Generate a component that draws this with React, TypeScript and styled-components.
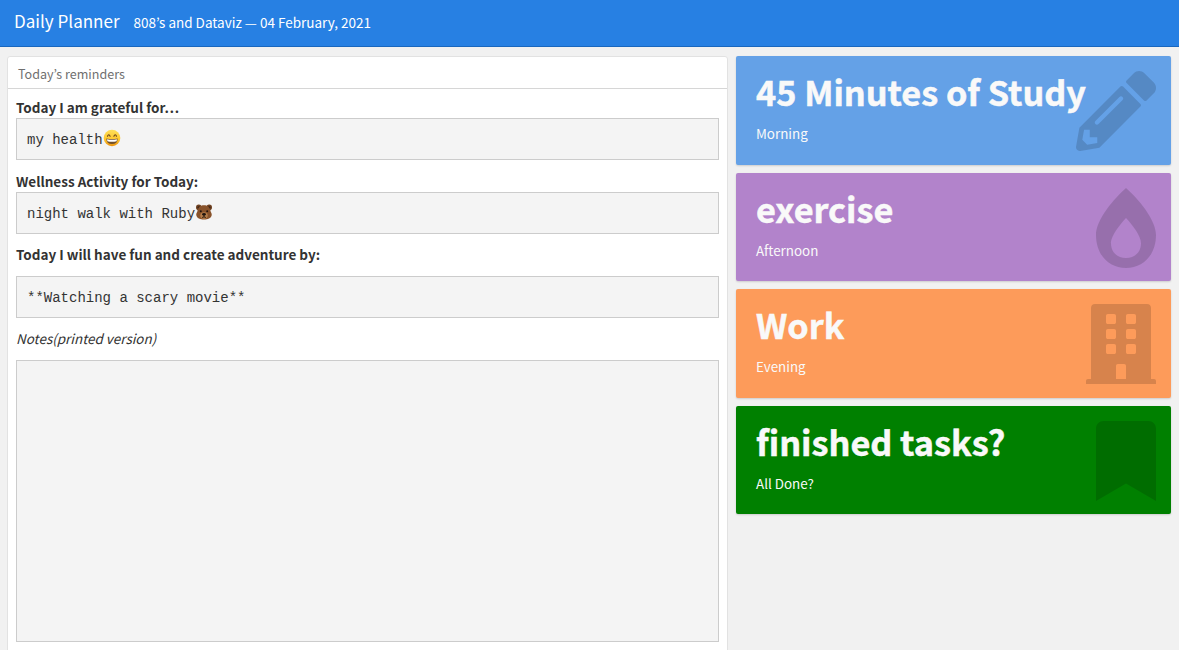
import React from "react";
import styled, { createGlobalStyle } from "styled-components";
import { FaBookmark, FaBuilding, FaBurn, FaPencilAlt } from "react-icons/fa";

const Global = createGlobalStyle`
  * { box-sizing: border-box; }
  body {
    margin: 0;
    background: #f1f1f1;
    color: #333;
    font-family: "Noto Sans CJK KR", "Open Sans", sans-serif;
    overflow: hidden;
  }
`;

const Page = styled.div`
  height: 650px;
  display: flex;
  flex-direction: column;
  overflow: hidden;
`;

const Navbar = styled.header`
  flex: none;
  display: flex;
  align-items: flex-start;
  height: 47px;
  padding: 7px 14px 0;
  gap: 14px;
  background: #2780e3;
  border-bottom: 1px solid #1967be;
  color: #fff;
  white-space: nowrap;
`;

const Brand = styled.span`
  font-size: 17.05px;
  line-height: 28px;
`;

const Author = styled.span`
  font-size: 13.5px;
  line-height: 30px;
`;

const Dashboard = styled.main`
  flex: 1;
  min-height: 0;
  display: grid;
  grid-template-columns: 721px 435px;
  column-gap: 8px;
  padding: 9px 8px 0 7px;
`;

const Panel = styled.section`
  height: 640px;
  background: #fff;
  border: 1px solid #e2e2e2;
  border-radius: 3px;
`;

const PanelTitle = styled.div`
  height: 32px;
  padding-left: 10px;
  border-bottom: 1px solid #d6d6d6;
  color: #6f6f6f;
  font-size: 12.55px;
  line-height: 34px;
`;

const PanelBody = styled.div`
  padding: 0 8px;
`;

const Prompt = styled.div<{ $top: number; $bottom: number }>`
  padding: ${(p) => p.$top}px 0 ${(p) => p.$bottom}px;
  font-size: 13.5px;
  font-weight: 700;
  line-height: 20px;
`;

const NotesLabel = styled.em`
  display: block;
  padding: 10px 0 12px;
  font-size: 13.45px;
  line-height: 20px;
`;

const Entry = styled.pre<{ $height?: number }>`
  display: flex;
  align-items: center;
  height: ${(p) => p.$height ?? 42}px;
  margin: 0;
  padding: 2px 10px 0;
  background: #f4f4f4;
  border: 1px solid #ccc;
  font: 14px/20px "Liberation Mono", monospace;
`;

const Emoji = styled.svg`
  flex: none;
  width: 18px;
  height: 18px;
  margin-top: -4px;
`;

const Cards = styled.aside`
  display: flex;
  flex-direction: column;
  gap: 8px;
`;

const Card = styled.article<{ $color: string }>`
  display: flex;
  justify-content: space-between;
  height: 108.6px;
  padding: 15px 15px 0 20px;
  background: ${(p) => p.$color};
  border-radius: 2px;
  box-shadow: 0 1px 2px rgba(0, 0, 0, 0.15);
  color: #f9f9f9;
  white-space: nowrap;
`;

const CardText = styled.div`
  width: 0;
  z-index: 1;
`;

const Value = styled.div`
  font-size: 34.25px;
  font-weight: 700;
  line-height: 40px;
  font-variant-ligatures: none;
  -webkit-text-stroke: 0.5px currentColor;
`;

const Caption = styled.div`
  margin-top: 12px;
  font-size: 13.4px;
  line-height: 20px;
`;

const CardIcon = styled.div`
  height: 80px;
  color: rgba(0, 0, 0, 0.15);
  svg {
    display: block;
    width: 80px;
    height: 80px;
  }
`;

const Grin = () => (
  <Emoji viewBox="0 0 18 18" aria-label="grinning face">
    <defs>
      <linearGradient id="face" x1="0" y1="0" x2="0" y2="1">
        <stop offset="0" stopColor="#ffe05a" />
        <stop offset=".6" stopColor="#fdc52c" />
        <stop offset="1" stopColor="#ec9210" />
      </linearGradient>
    </defs>
    <circle cx="9" cy="9" r="8.3" fill="url(#face)" />
    <path d="M4.5 7.3q1.3-3 2.6 0M10.9 7.3q1.3-3 2.6 0" fill="none" stroke="#67401b" strokeWidth="1.1" strokeLinecap="round" />
    <path d="M3.3 9.5q5.7 1.2 11.4 0Q14.5 15 9 15T3.3 9.5z" fill="#73502a" />
    <path d="M4 10.2q5 1 10 0l-.4 2.1q-4.6 1-9.2 0z" fill="#fff" />
  </Emoji>
);

const Bear = () => (
  <Emoji viewBox="0 0 18 18" aria-label="bear">
    <circle cx="3.8" cy="4.4" r="2.8" fill="#704221" />
    <circle cx="14.2" cy="4.4" r="2.8" fill="#704221" />
    <circle cx="3.8" cy="4.6" r="1.4" fill="#3e2617" />
    <circle cx="14.2" cy="4.6" r="1.4" fill="#3e2617" />
    <path d="M9 2.2c4 0 6 2.5 6.5 5.7.3 1.6 1.6 2.4 1.2 4.4-.6 3-4 4.2-7.7 4.2s-7.1-1.2-7.7-4.2c-.4-2 .9-2.8 1.2-4.4C3 4.7 5 2.2 9 2.2z" fill="#88522a" />
    <ellipse cx="9" cy="12.6" rx="3.7" ry="3.3" fill="#b57d49" />
    <circle cx="5.8" cy="8.2" r="1" fill="#21140e" />
    <circle cx="12.2" cy="8.2" r="1" fill="#21140e" />
    <ellipse cx="9" cy="11.3" rx="1.9" ry="1.4" fill="#20150f" />
    <path d="M9 12v1.8m-1.9.7q1.9-1.3 3.8 0" fill="none" stroke="#20150f" strokeWidth=".9" />
  </Emoji>
);

const cards = [
  { value: "45 Minutes of Study", caption: "Morning", color: "#64a1e7", Icon: FaPencilAlt },
  { value: "exercise", caption: "Afternoon", color: "#b283cb", Icon: FaBurn },
  { value: "Work", caption: "Evening", color: "#fd9b5a", Icon: FaBuilding },
  { value: "finished tasks?", caption: "All Done?", color: "#008000", Icon: FaBookmark },
];

export default function App() {
  return (
    <Page>
      <Global />
      <Navbar>
        <Brand>Daily Planner</Brand>
        <Author>808’s and Dataviz — 04 February, 2021</Author>
      </Navbar>
      <Dashboard>
        <Panel>
          <PanelTitle>Today’s reminders</PanelTitle>
          <PanelBody>
            <Prompt $top={8} $bottom={1}>Today I am grateful for…</Prompt>
            <Entry>my health<Grin /></Entry>
            <Prompt $top={11} $bottom={1}>Wellness Activity for Today:</Prompt>
            <Entry>night walk with Ruby<Bear /></Entry>
            <Prompt $top={10} $bottom={12}>Today I will have fun and create adventure by:</Prompt>
            <Entry>**Watching a scary movie**</Entry>
            <NotesLabel>Notes(printed version)</NotesLabel>
            <Entry $height={282} />
          </PanelBody>
        </Panel>
        <Cards>
          {cards.map(({ value, caption, color, Icon }) => (
            <Card key={value} $color={color}>
              <CardText>
                <Value>{value}</Value>
                <Caption>{caption}</Caption>
              </CardText>
              <CardIcon><Icon preserveAspectRatio="xMaxYMid meet" /></CardIcon>
            </Card>
          ))}
        </Cards>
      </Dashboard>
    </Page>
  );
}
